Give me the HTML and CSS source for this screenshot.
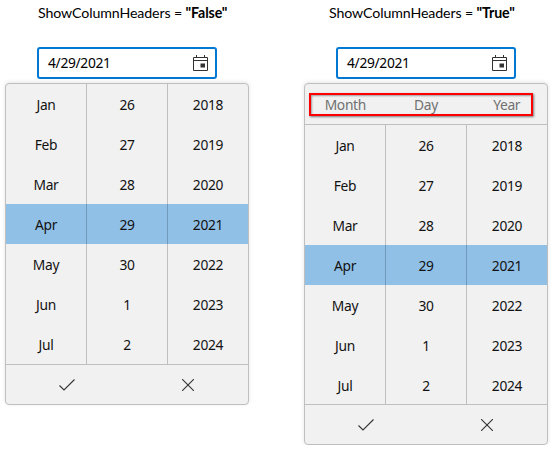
FILE: index.html
```html
<!DOCTYPE html>
<html lang="en">
<head>
<meta charset="utf-8">
<title>ShowColumnHeaders</title>
<link rel="stylesheet" href="styles.css">
</head>
<body>
<main class="demos">
  <section class="demo">
    <h2 class="title">ShowColumnHeaders = <b>"False"</b></h2>
    <div class="field"><span>4/29/2021</span>
      <svg class="calendar" width="16" height="17" viewBox="0 0 16 17"><path d="M.5 2.5h14v13H.5zM.5 5.5h14M3.5 0v3M11.5 0v3" fill="none" stroke="#333"/><path d="M7.5 8.5h4.5v4H7.5z" fill="#333"/></svg>
    </div>
    <div class="picker">
      <div class="columns">
        <ul class="column"><li>Jan</li><li>Feb</li><li>Mar</li><li class="selected">Apr</li><li>May</li><li>Jun</li><li>Jul</li></ul>
        <ul class="column"><li>26</li><li>27</li><li>28</li><li class="selected">29</li><li>30</li><li>1</li><li>2</li></ul>
        <ul class="column"><li>2018</li><li>2019</li><li>2020</li><li class="selected">2021</li><li>2022</li><li>2023</li><li>2024</li></ul>
      </div>
      <div class="actions">
        <svg width="16" height="12" viewBox="0 0 16 12"><path d="M.5 6.5l4.5 4.5L15.5.5"/></svg>
        <svg width="12" height="12" viewBox="0 0 12 12"><path d="M0 0l12 12M12 0L0 12"/></svg>
      </div>
    </div>
  </section>
  <section class="demo">
    <h2 class="title">ShowColumnHeaders = <b>"True"</b></h2>
    <div class="field"><span>4/29/2021</span>
      <svg class="calendar" width="16" height="17" viewBox="0 0 16 17"><path d="M.5 2.5h14v13H.5zM.5 5.5h14M3.5 0v3M11.5 0v3" fill="none" stroke="#333"/><path d="M7.5 8.5h4.5v4H7.5z" fill="#333"/></svg>
    </div>
    <div class="picker with-headers">
      <div class="headers"><span>Month</span><span>Day</span><span>Year</span><div class="highlight"></div></div>
      <div class="columns">
        <ul class="column"><li>Jan</li><li>Feb</li><li>Mar</li><li class="selected">Apr</li><li>May</li><li>Jun</li><li>Jul</li></ul>
        <ul class="column"><li>26</li><li>27</li><li>28</li><li class="selected">29</li><li>30</li><li>1</li><li>2</li></ul>
        <ul class="column"><li>2018</li><li>2019</li><li>2020</li><li class="selected">2021</li><li>2022</li><li>2023</li><li>2024</li></ul>
      </div>
      <div class="actions">
        <svg width="16" height="12" viewBox="0 0 16 12"><path d="M.5 6.5l4.5 4.5L15.5.5"/></svg>
        <svg width="12" height="12" viewBox="0 0 12 12"><path d="M0 0l12 12M12 0L0 12"/></svg>
      </div>
    </div>
  </section>
</main>
</body>
</html>
```
FILE: styles.css
```css
* { box-sizing: border-box; }
body {
  margin: 0;
  background: #fff;
  color: #111;
  font: 13.8px/20px "Noto Sans", "Open Sans", sans-serif;
  letter-spacing: -.32px;
}
.demos { display: flex; gap: 55px; padding-left: 5px; }
.demo { width: 244px; flex: none; }
.title {
  margin: 0;
  height: 47px;
  padding: 3px 0 0 33px;
  font: 14.2px/20px Lato, sans-serif;
  letter-spacing: -.12px;
  color: #000;
  white-space: nowrap;
}
.demo + .demo .title { padding-left: 25px; }
.field {
  display: flex;
  align-items: center;
  justify-content: space-between;
  width: 180px;
  height: 32px;
  margin: 0 0 4px 32px;
  padding: 0 6px 0 9px;
  border: 2px solid #0078d4;
  border-radius: 3px;
  color: #000;
}
.picker {
  height: 322px;
  display: flex;
  flex-direction: column;
  border: 1px solid #bfbfbf;
  border-radius: 4px;
  background: #f1f1f1;
  box-shadow: 0 -1px 4px rgba(0, 0, 0, .1);
}
.with-headers { height: 362px; }
.headers {
  position: relative;
  display: grid;
  grid-template: 40px / repeat(3, 1fr);
  flex: 0 0 41px;
  height: 41px;
  min-height: 0;
  border-bottom: 1px solid #bfbfbf;
  line-height: 41px;
  text-align: center;
  color: #707070;
}
.headers span { height: 40px; }
.highlight {
  position: absolute;
  left: 4px;
  top: 9px;
  width: 224px;
  height: 23px;
  border: 2px solid #f00;
  box-shadow: 1px 1px 2px rgba(0, 0, 0, .5), inset 1px 1px 2px rgba(0, 0, 0, .35);
}
.columns { display: flex; flex: 1; min-height: 0; overflow: hidden; }
.column {
  flex: 0 0 81px;
  height: 280px;
  margin: 0;
  padding: 0;
  list-style: none;
  text-align: center;
  border-right: 1px solid #bfbfbf;
}
.column:last-child { flex-basis: 80px; border-right: 0; }
.column li { height: 40px; line-height: 41px; }
.column .selected { background: #91c0e7; }
.column:not(:last-child) .selected { margin-right: -1px; border-right: 1px solid #7099bb; }
.actions {
  display: grid;
  grid-template-columns: 1fr 1fr;
  flex: 0 0 40px;
  place-items: center;
  border-top: 1px solid #bfbfbf;
}
.actions svg { fill: none; stroke: #333; stroke-width: 1.1; }
```
